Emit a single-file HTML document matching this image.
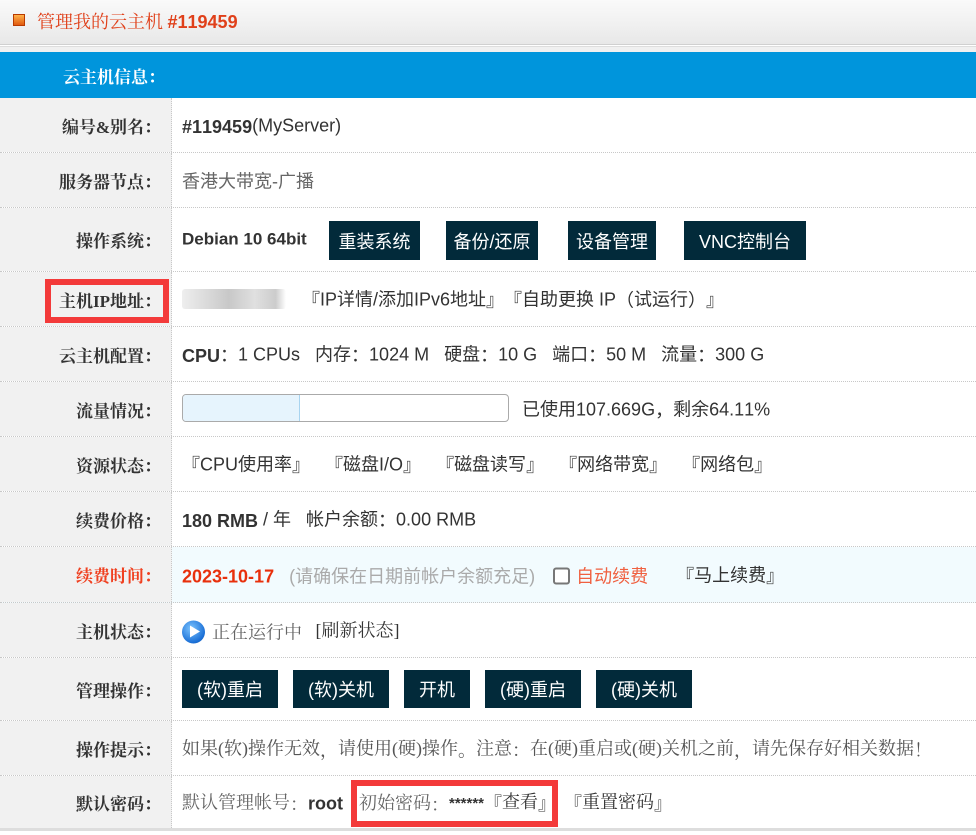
<!DOCTYPE html>
<html lang="zh-CN"><head><meta charset="utf-8">
<style>
*{margin:0;padding:0;box-sizing:border-box}
body{width:976px;height:835px;background:#fff;position:relative;overflow:hidden;font-family:"Liberation Sans","Noto Sans CJK SC",sans-serif;font-size:18px;color:#333;font-kerning:none}
.l{display:inline-block;width:1em;text-align:left}
.r{display:inline-block;width:1em;text-align:right}
.hdr{position:absolute;left:0;top:0;width:976px;height:45px;background:linear-gradient(#fafafa,#e8e8e8);border-bottom:1px solid #d0d0d0}
.hdr2{position:absolute;left:0;top:46px;width:976px;height:6px;background:#f0f0f0;border-top:1px solid #ddd}
.title{position:absolute;left:37px;top:8px;font-size:18px;color:#e0401a;font-family:"Liberation Serif","Noto Serif CJK SC",serif}
.title b{font-family:"Liberation Sans",sans-serif}
.ico{position:absolute;left:13px;top:14px;width:12px;height:12px;background:linear-gradient(#ffb24a,#e05a10);border:1px solid #b83a00}
.blue{position:absolute;left:0;top:52px;width:976px;height:46px;background:#0095dc}
.blue span.t{position:absolute;left:63px;top:11px;color:#fff;font-weight:bold;font-size:17px;font-family:"Liberation Serif","Noto Serif CJK SC",serif}
.row{position:absolute;left:0;width:976px;border-bottom:1px dotted #c8c8c8}
.lab{position:absolute;left:0;top:0;bottom:0;width:172px;background:#f1f1f1;border-right:1px dotted #c8c8c8;text-align:right;padding-right:10px;font-weight:bold;font-family:"Liberation Serif","Noto Serif CJK SC",serif;font-size:17px;color:#333;display:flex;align-items:center;justify-content:flex-end}
.val{position:absolute;left:182px;top:50%;transform:translateY(-45%);line-height:26px;white-space:nowrap;font-size:18px;color:#333}
.val *{vertical-align:middle}
.sf{font-family:"Liberation Serif","Noto Serif CJK SC",serif}
.btn{position:absolute;background:#022a3a;color:#fff;font-size:18px;display:flex;align-items:center;justify-content:center}
.g{color:#666}
</style></head><body>
<div class="hdr"><div class="ico"></div><div class="title">管理我的云主机 <b>#119459</b></div></div>
<div class="hdr2"></div>
<div class="blue"><span class="t">云主机信息<span class="l">：</span></span></div>

<div class="row" style="top:98px;height:55px"><div class="lab">编号&amp;别名<span class="l">：</span></div><div class="val"><b>#119459</b>(MyServer)</div></div>
<div class="row" style="top:153px;height:55px"><div class="lab">服务器节点<span class="l">：</span></div><div class="val g">香港大带宽-广播</div></div>
<div class="row" style="top:208px;height:64px"><div class="lab">操作系统<span class="l">：</span></div><div class="val" style="margin-top:-2px;font-size:17px"><b>Debian 10 64bit</b></div>
<div class="btn" style="left:329px;top:13px;width:91px;height:39px">重装系统</div>
<div class="btn" style="left:446px;top:13px;width:92px;height:39px">备份/还原</div>
<div class="btn" style="left:568px;top:13px;width:88px;height:39px">设备管理</div>
<div class="btn" style="left:684px;top:13px;width:122px;height:39px">VNC控制台</div></div>
<div class="row" style="top:272px;height:55px"><div class="lab">主机IP地址<span class="l">：</span></div>
<div style="position:absolute;left:45px;top:7px;width:124px;height:44px;border:6px solid #f33a3a"></div>
<div style="position:absolute;left:182px;top:17px;width:104px;height:20px;background:linear-gradient(90deg,#eee,#d5d5d5 30%,#c8c8c8 45%,#e0e0e0 70%,#ccc 90%,#fff);border-radius:3px"></div>
<div class="val" style="left:302px"><span class="r">『</span>IP详情/添加IPv6地址<span class="l">』</span><span class="r">『</span>自助更换 IP<span class="r">（</span>试运行<span class="l">）</span><span class="l">』</span></div></div>
<div class="row" style="top:327px;height:55px"><div class="lab">云主机配置<span class="l">：</span></div><div class="val"><b>CPU</b><span class="l">：</span>1 CPUs&nbsp;&nbsp;&nbsp;内存<span class="l">：</span>1024 M&nbsp;&nbsp;&nbsp;硬盘<span class="l">：</span>10 G&nbsp;&nbsp;&nbsp;端口<span class="l">：</span>50 M&nbsp;&nbsp;&nbsp;流量<span class="l">：</span>300 G</div></div>
<div class="row" style="top:382px;height:55px"><div class="lab">流量情况<span class="l">：</span></div>
<div style="position:absolute;left:182px;top:12px;width:327px;height:28px;border:1px solid #aaa;border-radius:4px;overflow:hidden"><div style="width:117px;height:100%;background:#e6f4fd;border-right:1px solid #a8d4f0"></div></div>
<div class="val" style="left:522px">已使用107.669G<span class="l">，</span>剩余64.11%</div></div>
<div class="row" style="top:437px;height:55px"><div class="lab">资源状态<span class="l">：</span></div><div class="val"><span class="r">『</span>CPU使用率<span class="l">』</span>&nbsp;&nbsp;&nbsp;<span class="r">『</span>磁盘I/O<span class="l">』</span>&nbsp;&nbsp;&nbsp;<span class="r">『</span>磁盘读写<span class="l">』</span>&nbsp;&nbsp;&nbsp;<span class="r">『</span>网络带宽<span class="l">』</span>&nbsp;&nbsp;&nbsp;<span class="r">『</span>网络包<span class="l">』</span></div></div>
<div class="row" style="top:492px;height:55px"><div class="lab">续费价格<span class="l">：</span></div><div class="val"><b>180 RMB</b> / 年&nbsp;&nbsp;&nbsp;帐户余额<span class="l">：</span>0.00 RMB</div></div>
<div class="row" style="top:547px;height:56px;background:#f2fbfe"><div class="lab" style="color:#f04020">续费时间<span class="l">：</span></div><div class="val"><b style="color:#e8300c">2023-10-17</b>&nbsp;&nbsp;&nbsp;<span style="color:#aaa">(请确保在日期前帐户余额充足)</span><span style="display:inline-block;width:17px;height:17px;border:2px solid #777;border-radius:3px;margin:0 6px 0 18px;background:#fff"></span><span style="color:#f06040">自动续费</span><span style="margin-left:28px"><span class="r">『</span>马上续费<span class="l">』</span></span></div></div>
<div class="row" style="top:603px;height:55px"><div class="lab">主机状态<span class="l">：</span></div><div class="val sf"><span style="display:inline-block;width:23px;height:23px;border-radius:50%;background:radial-gradient(circle at 40% 35%,#7cc4ff,#1a6fd6 70%,#0b4aa0);position:relative;margin-right:7px"><span style="position:absolute;left:8px;top:5px;border-left:10px solid #fff;border-top:6.5px solid transparent;border-bottom:6.5px solid transparent"></span></span><span class="g">正在运行中</span>&nbsp;&nbsp;&nbsp;[刷新状态]</div></div>
<div class="row" style="top:658px;height:63px"><div class="lab">管理操作<span class="l">：</span></div>
<div class="btn" style="left:182px;top:12px;width:96px;height:38px">(软)重启</div>
<div class="btn" style="left:293px;top:12px;width:96px;height:38px">(软)关机</div>
<div class="btn" style="left:404px;top:12px;width:66px;height:38px">开机</div>
<div class="btn" style="left:485px;top:12px;width:96px;height:38px">(硬)重启</div>
<div class="btn" style="left:596px;top:12px;width:96px;height:38px">(硬)关机</div></div>
<div class="row" style="top:721px;height:55px"><div class="lab">操作提示<span class="l">：</span></div><div class="val sf" style="color:#555">如果(软)操作无效<span class="l">，</span>请使用(硬)操作<span class="l">。</span>注意<span class="l">：</span>在(硬)重启或(硬)关机之前<span class="l">，</span>请先保存好相关数据<span class="l">！</span></div></div>
<div class="row" style="top:776px;height:55px;border-bottom:3px solid #ddd"><div class="lab">默认密码<span class="l">：</span></div><div class="val"><span class="sf g">默认管理帐号<span class="l">：</span></span><b>root</b></div>
<div style="position:absolute;left:351px;top:4px;width:207px;height:47px;border:6px solid #f33a3a"></div>
<div class="val sf" style="left:359px"><span class="g">初始密码<span class="l">：</span></span><b style="font-family:'Liberation Sans';font-size:15px">******</b><span class="r">『</span>查看<span class="l">』</span><span class="r" style="margin-left:8px">『</span>重置密码<span class="l">』</span></div></div>
</body></html>
